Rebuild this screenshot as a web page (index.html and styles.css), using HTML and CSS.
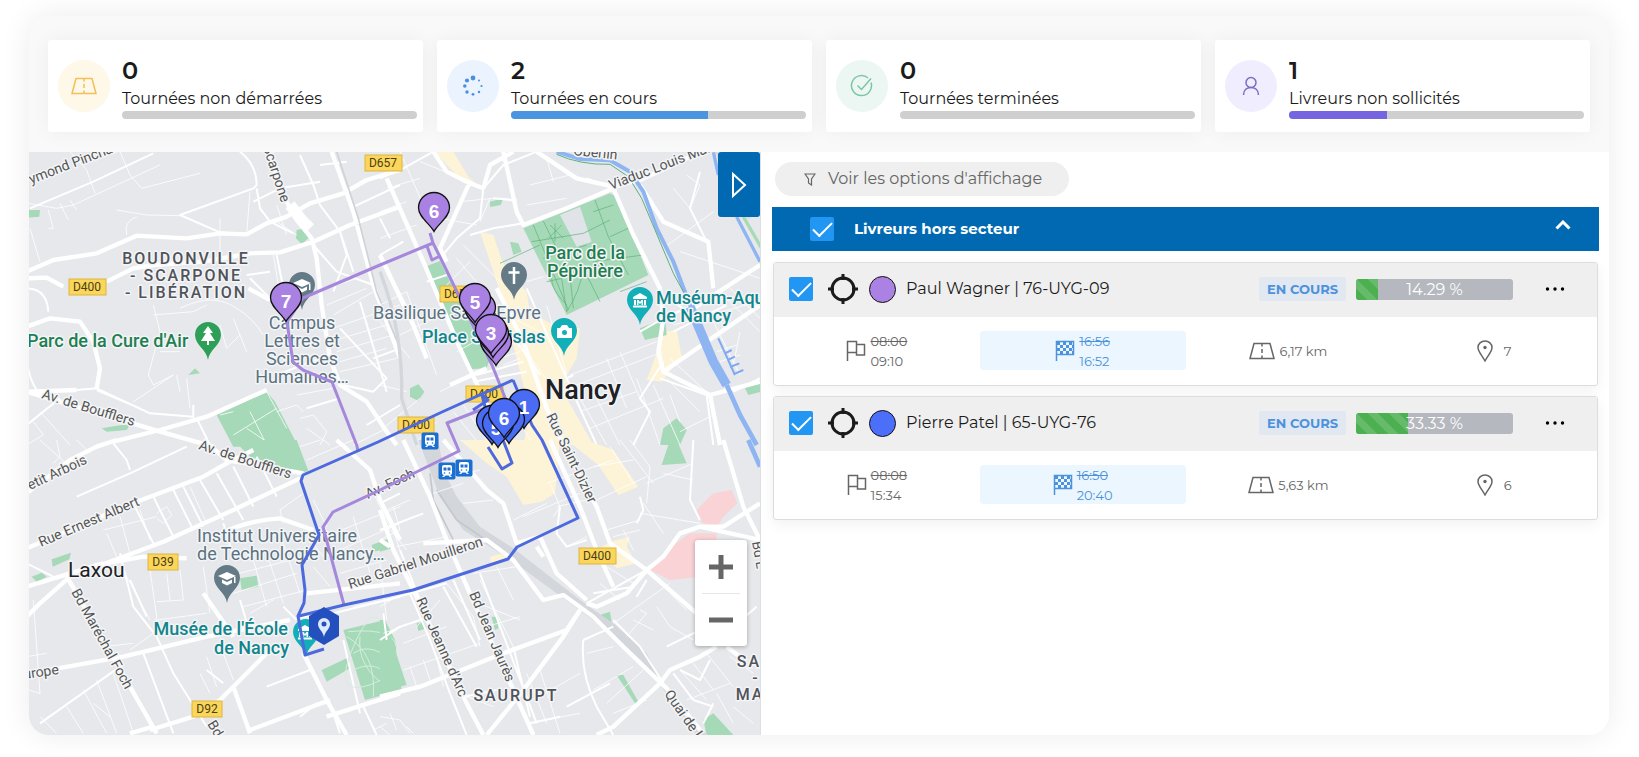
FILE: index.html
```html
<!DOCTYPE html>
<html lang="fr">
<head>
<meta charset="utf-8">
<meta name="viewport" content="width=device-width, initial-scale=1">
<title>Suivi des tournées</title>
<link rel="stylesheet" href="styles.css">
</head>
<body>
<svg class="defs" width="0" height="0" aria-hidden="true">
  <symbol id="i-road" viewBox="0 0 26 18"><path d="M5 1.500h16l4 15H1zM13 1.500v3M13 7v4M13 13.500v3" fill="none" stroke="currentColor" stroke-width="1.500"/></symbol>
  <symbol id="i-flag" viewBox="0 0 20 22"><path d="M1.500 21V1.500h9v11h-9M10.500 4.500h8v10.500h-8v-2.500" fill="none" stroke="currentColor" stroke-width="1.500"/></symbol>
  <symbol id="i-finish" viewBox="0 0 20 22"><path d="M1.500 21V1.500h17v13h-17" fill="none" stroke="currentColor" stroke-width="1.500"/><path d="M2 2h3v3H2zM8 2h3v3H8zM14 2h3v3h-3zM5 5h3v3H5zM11 5h3v3h-3zM2 8h3v3H2zM8 8h3v3H8zM14 8h3v3h-3zM5 11h3v3H5zM11 11h3v3h-3zM17 5h2v3h-2zM17 11h2v3h-2z" fill="currentColor"/></symbol>
  <symbol id="i-place" viewBox="0 0 16 22"><path d="M8 21C5 15.500 1 11.500 1 7.500a7 6.500 0 0 1 14 0c0 4-4 8-7 13.500z" fill="none" stroke="currentColor" stroke-width="1.500"/><circle cx="8" cy="7.500" r="1.700" fill="currentColor"/></symbol>
  <symbol id="i-target" viewBox="0 0 30 30"><circle cx="15" cy="15" r="11" fill="none" stroke="currentColor" stroke-width="3"/><path d="M15 0v6M15 24v6M0 15h6M24 15h6" stroke="currentColor" stroke-width="3"/></symbol>
  <symbol id="i-dots" viewBox="0 0 20 4"><circle cx="2.500" cy="2" r="1.700"/><circle cx="10" cy="2" r="1.700"/><circle cx="17.500" cy="2" r="1.700"/></symbol>
  <symbol id="pin" viewBox="-17 -17 34 42" overflow="visible"><path d="M0 23.500C-4 16-15.500 9-15.500 0a15.500 15.500 0 0 1 31 0C15.500 9 4 16 0 23.500z" stroke="#111" stroke-width="1.300"/></symbol>
  <symbol id="poi" viewBox="-14 -14 28 40" overflow="visible"><path d="M0 25C-1 15-13 10-13 0a13 13 0 0 1 26 0C13 10 1 15 0 25z"/></symbol>
  <symbol id="cap" viewBox="-9 -7 18 14" overflow="visible"><path d="M0-6 9-2 0 2-9-2zM-5 1.500 0 4l5-2.500V5L0 7.500-5 5zM7-1h1.500v6H7z" fill="#fff"/></symbol>
  <symbol id="museum" viewBox="-7 -7 14 14" overflow="visible"><path d="M0-7 7-3v2H-7v-2zM-6 0h2v5h-2zM4 0h2v5H4zM-7 5.500H7v2H-7zM-3 5V0h1.500L0 2 1.500 0H3v5H1.500V2.500L0 4-1.500 2.500V5z" fill="#fff"/></symbol>
  <symbol id="train" viewBox="-9 -9 18 18" overflow="visible"><rect x="-8.500" y="-8.500" width="17" height="17" rx="2" fill="#1a6fd0"/><path d="M-5-4q0-2 2-2h6q2 0 2 2v6q0 2-2 2l2 2h-2l-1.500-1.500h-3L-3 6h-2l2-2q-2 0-2-2z" fill="#fff"/><path d="M-3.500-3.500h3v3h-3zM.500-3.500h3v3h-3z" fill="#1a6fd0"/><circle cx="-2.500" cy="2" r=".8" fill="#1a6fd0"/><circle cx="2.500" cy="2" r=".8" fill="#1a6fd0"/></symbol>
</svg>

<main class="shell">
  <section class="stats">
    <article class="stat">
      <span class="stat-icon amber"><svg width="26" height="18"><use href="#i-road"/></svg></span>
      <div class="stat-body">
        <strong class="stat-value">0</strong>
        <span class="stat-label">Tournées non démarrées</span>
        <div class="meter"></div>
      </div>
    </article>
    <article class="stat">
      <span class="stat-icon blue"><svg width="22" height="22" viewBox="0 0 22 22" fill="currentColor"><circle cx="11" cy="3" r="2.400"/><circle cx="5" cy="5.500" r="2.100"/><circle cx="2.800" cy="11" r="1.800"/><circle cx="5" cy="17" r="1.700"/><circle cx="11" cy="19.300" r="1.400"/><circle cx="17" cy="17" r="1.200"/><circle cx="19.500" cy="11" r="1.100"/><circle cx="17" cy="5.500" r="1"/></svg></span>
      <div class="stat-body">
        <strong class="stat-value">2</strong>
        <span class="stat-label">Tournées en cours</span>
        <div class="meter"><div class="meter-fill blue-fill" style="width:66.67%"></div></div>
      </div>
    </article>
    <article class="stat">
      <span class="stat-icon green"><svg width="24" height="24" viewBox="0 0 24 24" fill="none" stroke="currentColor" stroke-width="1.500"><path d="M21 8.500A10 10 0 1 1 18 4M7.500 11.500l4 4L21 4.500"/></svg></span>
      <div class="stat-body">
        <strong class="stat-value">0</strong>
        <span class="stat-label">Tournées terminées</span>
        <div class="meter"></div>
      </div>
    </article>
    <article class="stat">
      <span class="stat-icon violet"><svg width="20" height="20" viewBox="0 0 20 20" fill="none" stroke="currentColor" stroke-width="1.500"><circle cx="10" cy="6.500" r="5"/><path d="M2.500 19c0-5 3.500-7.500 7.500-7.500s7.500 2.500 7.500 7.500"/></svg></span>
      <div class="stat-body">
        <strong class="stat-value">1</strong>
        <span class="stat-label">Livreurs non sollicités</span>
        <div class="meter"><div class="meter-fill violet-fill" style="width:33.33%"></div></div>
      </div>
    </article>
  </section>

  <div class="workspace">
    <section class="map" aria-label="Carte">
      <svg class="map-canvas" viewBox="29 152 732 583" preserveAspectRatio="xMinYMin slice">
        <rect x="29" y="152" width="900" height="900" fill="#e6e8ec"/>
        <!-- north-west -->
        <g transform="translate(20 145) scale(.33333)">
          <path class="park" d="M590 810 740 740 765 770 835 905H640zM830 255l25-5 10 30-20 18-17-18zM25 195l35 0-2 20-33 3zM505 690l20-20 15 15zM245 850l60-10 25 0-10 15-60 5z"/>
          <path class="r1" d="M25 175 110 190 160 180 420 60M300 20 330 90 365 130 540 85M150 20 200 75 225 145M85 195 100 250 85 250M120 175 145 225M150 165 170 195M30 250 60 350M290 195 380 210 480 212M320 270Q310 230 350 215M600 220V320M690 140 680 270M760 330 775 420M400 480 420 560 385 690 400 720 460 690M400 510 520 500 560 480M480 490Q580 440 650 490 700 520 730 570M600 540 620 610 660 570M640 520 680 620M420 620 480 620M470 690 480 740M500 700 510 790M340 770 460 690M40 830 70 870 20 900M60 800 150 900M600 810 640 800M640 870 770 790M680 850 740 890M690 800 740 900M770 800 830 780 850 800M830 750 940 730M740 740 800 850M840 820 880 810 920 860 900 900M860 850 930 900M1000 900 1100 850M940 550 1140 480M930 590 1100 540M950 620 1120 570M960 650 1100 610M960 680 1130 640M940 510 1060 440M920 480 1040 430M920 430 1010 400M770 230 830 270M770 180 800 270"/>
          <path class="r2" d="M30 190 220 110 400 25M660 20Q710 60 710 120L700 130 480 210 600 262 680 268M710 130 720 190 750 230 820 265M700 170 780 130 900 110M840 30 880 120 900 180 960 260 1000 380M900 60 980 50M990 190 1140 120M960 260 980 330 940 440M1080 220 1110 280M880 300 950 380 1060 420M770 330 790 430M680 390 750 380M690 400 760 470M20 430Q80 430 85 500M20 620Q20 690 50 735M170 735 230 730 390 805 520 815 520 780M230 735 360 790M530 820 570 900M20 840 120 760M860 790 960 760M1040 840 1140 780M960 550 1100 700 1060 740 970 720M1020 470 1100 740M1060 640 1140 610M770 690 900 640"/>
          <path class="r4" d="M20 380 100 345 230 325 350 272 500 280 600 265 680 268 740 235 800 215 870 175 970 145 1040 105 1140 75M20 400 80 398 130 425M260 410 340 370 400 360 550 350 690 325 780 322 880 290 990 240 1140 185M740 20 800 170 830 225 875 280 890 340 905 480 930 640 960 720 1040 770 1100 860 1130 900M935 20 1000 200 1060 420 1140 640M685 430 750 465M20 545 90 520 180 530 220 590 240 670 230 730M170 735 20 740M20 740 420 860 580 905M280 890 420 855 560 815 740 735"/>
          <path d="M810 180 845 225 870 250" fill="none" stroke="#fff" stroke-width="34"/>
          <path d="M950 20 1015 220 1070 440 1140 610" fill="none" stroke="#cfd2d6" stroke-width="5"/>
        </g>
        <!-- north-east -->
        <g transform="translate(380 145) scale(.33333)">
          <path class="shop" d="M165 20 220 20 265 95 305 130 255 115 205 65zM300 260 340 270 365 345 400 400 440 440 450 500 520 540 600 550 590 640 560 690 560 760 640 900 430 900 450 800 390 560 360 440zM850 560 890 555 905 635 845 710 800 705 830 625z"/>
          <path class="park" d="M430 250 690 145 710 155 805 390 560 510zM135 365l45-17 20 42 130 250-10 30-55 3zM390 290l25 5 10 25-25 10zM780 550l75-30 5 50-65 15zM850 850l40-30 30 35-20 45h-60zM330 170l40-10-8 20-32 6zM1095 730l50-30v40l-40 10zM90 730 115 718 133 740 115 768 90 755z"/>
          <path d="M540 210 600 185 635 290 590 305z" fill="#e0e3e8"/>
          <path d="M460 240 565 495M490 228 530 310M645 165 685 275 745 390M455 290 610 265 690 225M490 340 620 300M640 200 700 180M690 275 745 250M640 350 790 330M610 370 660 470M560 500Q600 440 610 370M560 500 545 400 500 410M580 490 570 390M510 240 550 280M545 240 505 280M525 235V290M560 480Q500 420 520 380" class="path"/>
          <path class="r1" d="M0 200 80 170M0 280 110 240M20 130 120 100M60 20 130 180M120 50 270 110M20 370 90 500M0 480 80 440M80 440 170 690M0 530 90 640M60 570 160 520M180 220 290 240M240 170 340 160 410 170M330 160 300 230M200 420 270 350M230 340 330 460M250 300 370 420M400 520 480 560M440 410 490 395M440 620 510 720M360 640 420 620M370 660 420 640M500 480 560 690M570 690 830 590M590 720 850 620M600 760 680 900M640 740 720 900M680 640 740 790M720 620 780 760M600 800 770 740M630 850 850 760M770 700 840 900M820 720 900 900M900 860 1000 810M450 120 570 90M440 180 560 160M500 40 520 110M880 130 930 190 960 120 920 90M1010 20 1040 80M850 310 1000 200M900 320 1140 400M900 480 1140 450M880 540 1100 480M1020 440 1140 560M1050 430 1140 520M1060 660 1080 560M1000 530 1080 690M1020 650 1080 630M1010 620 1070 600M870 640 1000 760M860 700 960 800M870 750 900 830M0 720 80 740M10 850 120 760M180 740 280 690M230 620 340 560M100 900 170 830M220 800 300 900M250 780 330 900M400 800 460 900"/>
          <path class="r2" d="M0 100 70 70 160 20M250 100 310 130 370 60 470 20M310 130 300 220 230 280 180 340M270 270 340 250 430 235M340 160 410 165M0 330 70 290M140 410 200 390M440 430 560 700 600 790 650 900M290 690 430 650M280 710 440 680M410 590 480 690M560 700 580 690M780 560 850 520 940 480M700 130 620 100M960 80 930 190 980 290M860 460 960 520M840 700 980 750 1000 900M850 650 780 760 810 800 760 900M1060 740 1100 720 1140 700M880 560 1040 480"/>
          <path class="r4" d="M20 100 130 350 240 610 330 800 380 900M270 110 180 310 200 350M160 20 200 80 270 115 310 130M370 20 410 200 430 240 560 190 700 130 760 270 840 430 850 520 835 620 850 680 990 750M310 130 330 60 400 20M470 20 590 100 700 125 780 105 900 50 960 20M780 120 850 230 985 290 1000 430M350 430 430 590 500 790 550 900M850 680 980 590 1140 480M990 750 1140 710M990 750 1020 900M940 490 1140 360M210 720 320 670M0 330 100 540 140 640"/>
          <path d="M0 380Q70 560 65 760L110 900" fill="none" stroke="#d3d6da" stroke-width="10"/>
          <path d="M1010 20 1080 200 1110 220" fill="none" stroke="#d9dbe0" stroke-width="8"/>
          <path class="water" d="M530 20 600 42 690 46 750 80 790 140 830 250 880 350 930 480 980 590" stroke-width="12"/>
          <path class="water" d="M930 485 1000 650 1040 720" stroke-width="28"/><path class="water" d="M1040 720 1080 810 1130 900" stroke-width="14"/>
          <path d="M530 28Q600 60 690 58L745 95 785 160 880 385 910 440" fill="none" stroke="#5cb079" stroke-width="3"/>
          <path class="water" d="M1000 20 1015 90M1070 215 1140 350" stroke-width="10"/>
          <path d="M1090 215 1145 310" stroke="#a8dab5" stroke-width="10"/>
          <path d="M1015 580 1065 690M1055 615 1035 625M1065 635 1043 645M1078 655 1050 666M1090 675 1060 688" stroke="#7fa9f0" stroke-width="6"/>
          <path d="M360 355 480 300M720 440 800 410" class="path"/>
        </g>
        <!-- south-west -->
        <g transform="translate(20 440) scale(.33333)">
          <path class="park" d="M640 0H830L865 92 840 100 690 50zM970 570l125-30 30 60 20 150-110 30zM905 690l75-35 10 30-70 40zM660 415l50-8 5 33-50 10zM95 358l58-20-5 20-50 22zM35 410l30-12 15 12-30 15zM1055 315l55-20v30l-50 10z"/>
          <path class="r1" d="M60 0 160 90M110 0 120 50 100 70M170 0 210 40M410 220 440 200 455 225 430 250 412 235M250 270 410 230M260 280 290 350M300 230 330 340M360 210 390 300M390 390 410 530 400 580 330 630M440 400 450 480M480 390 490 480 410 485M320 410 390 540M510 140 560 250M40 480 60 760 25 750M20 650 80 640M250 620 340 610M140 800 190 880M190 750 260 880M230 720 290 880M280 700 340 880M60 830 110 880M220 790 270 830M410 540 560 520M570 480 600 530M670 500 860 450M640 460 830 400M620 410 850 350M700 360 740 500M740 340 790 490M790 310 840 460M690 520 760 480M550 380 570 520M1080 370 1100 540M880 380 930 440M960 400 1100 360M870 300 910 350M940 280 1140 200M960 330 1140 250M1000 500 1140 470M1000 230 1050 400M1090 190 1140 330M1110 260 1050 140M840 20 900 0M860 60 1000 0M850 160 780 210 790 250M880 180 920 260M560 650 590 740M610 640 640 720M540 700 570 760M1080 860 1110 885M1060 870 1100 850"/>
          <path class="r2" d="M170 170 330 100 500 20M280 10 320 60 330 90M340 190 400 310M400 170 460 290M460 150 520 270M490 140 550 260M540 120 610 240M590 100 670 240M640 80 700 200M710 50 770 170M300 340 340 500 410 590 460 700 560 860M330 420 380 530M370 640 460 880M60 850 300 680M610 730 560 690M660 480 690 580M610 250 640 350M740 740 870 690M970 600 1020 820M1030 800 1070 885M20 370 100 410M940 820 960 880M840 830 890 790 920 790M1140 560 1090 590M860 540 1140 470M790 500 830 540"/>
          <path class="r4" d="M20 160 150 60 230 20 290 0M20 325 220 240 350 185 550 110 620 70 700 30M550 0 620 60 850 100M230 380 430 305 640 210 840 115M20 440 150 400 230 375 370 350 500 355M150 410 60 490 20 530M140 410 170 460 330 740 410 880M30 700 310 650 560 590 810 540M390 870 520 830 600 780 640 740 740 640M580 290Q680 240 780 235L880 270M640 740 690 880M330 880 400 860M690 870 930 780M950 0 1050 90 1080 180 1140 300M850 640 920 780 980 885M920 830 1140 760M860 460 1140 430M840 530 930 510M550 460 640 590"/>
          <path d="M985 575Q1140 560 1130 640T1030 740 1000 620 1090 560M1000 640Q1060 600 1130 680M1000 690Q1080 650 1130 740M980 590Q1070 640 1060 770M1020 590Q1010 680 1100 740" fill="none" stroke="#d3eedb" stroke-width="3"/>
        </g>
        <!-- south-east -->
        <g transform="translate(380 440) scale(.33333)">
          <path class="shop" d="M240 0H540l-15 160-40 25-55 10-50-85-60-40zM560 0h60l80 30 75 110-60 25-60-90zM690 305l60-15-10 30 30 50-60 15-50-60zM330 350l40-10 15 20-50 20z"/>
          <path class="care" d="M945 215 1000 160 1055 150 1072 190 1030 230 1010 262 970 250zM810 390 860 330 930 280H1010V405L870 420z"/>
          <path class="park" d="M0 540H15L80 735 0 755zM0 305l30-5 5 25-35 10zM870 0h20l30 70-75 5zM710 705l20 0 45 80-10 5zM970 840l30-20 60 65h-80zM660 525l30-10 5 30-25 5zM110 550l20-5 10 20-25 8zM335 530h15l5 35-10 5z"/>
          <path d="M115 0H175L190 90 230 170 300 260 400 325 620 495 700 550 800 640 850 740 930 850 985 885H950L830 720 780 660 640 540 400 365 250 270 180 170z" fill="#d3d6da"/>
          <path d="M150 100 160 180 220 300M170 150 230 240 390 350" fill="none" stroke="#c4c7cc" stroke-width="5"/>
          <path class="r1" d="M20 210 90 180M40 200 60 270 0 300M0 230 80 330M50 320 200 290M160 160 250 130M250 190 340 180M220 110 300 90M400 240 500 190M430 230 600 160M510 130 540 200 520 230M500 130 700 60M530 200 620 180M560 320 620 290M650 180 800 110M680 270 780 240M690 20 760 130M720 0 820 130M640 80 760 60M750 0 810 80 800 190M800 130 940 70M850 100 940 120M780 220 960 250M790 190 850 280M700 290 780 270M730 270 760 330M680 380 760 430M660 430 720 480M700 550 870 430M740 590 800 520 780 510M830 500 870 560 940 600M760 540 820 570M870 460 920 510M0 500 50 470M10 580 150 530M70 610 200 560M110 560 180 480M200 430 280 530 300 620M300 420 400 620M350 380 400 480M280 400 410 380M270 480 420 540M320 560 420 530M70 690 300 610M90 680 110 740M130 660 150 720M170 650 190 740M260 770 340 800M440 700 500 850M480 690 540 880M440 850 600 820M460 780 600 700M620 640 700 620M640 750 760 680M680 790 790 690M700 820 800 780M900 690 980 780M940 670 1000 750M980 640 1060 740M1010 760 1060 850M920 780 1050 730M1050 650 1120 700M1060 800 1120 850M30 820 50 870M80 860 100 880M0 830 60 840 90 880"/>
          <path class="r2" d="M0 190 60 160M0 270 130 220M60 330 120 480M20 480 200 430M90 460 150 600 210 760 260 885M0 600 60 560 150 530M10 520 20 600M190 440 290 620M220 420 300 600M300 400 470 850M400 620 450 830M250 770 350 750M540 200 530 280 560 320 620 300M610 600Q600 700 650 800L700 885M610 600 700 560M620 490 800 390M640 460 760 440M700 540 780 620 850 730M770 470 800 420M780 170 790 210 770 250M940 0 930 180 960 240M900 690 960 720 990 660M1130 500 1060 560M880 700 940 780 1000 800M860 620 920 590 980 560M1000 790 970 850M450 850 540 830M560 800 690 730"/>
          <path class="r4" d="M0 300 30 320M0 210 40 330 100 450 260 790 310 885M70 0 150 170 200 300 300 530 400 750 460 885M190 0 260 80 320 150 370 190 410 310 480 290 530 400 620 480M130 310 320 300 400 360 490 480 550 465 640 530 730 620 860 745 960 870M0 770 120 740 370 640 560 570 600 510M600 510 550 590 430 750 320 885M510 0 600 200 650 330 700 440M590 90 650 200 690 310 800 390 950 520M620 490 650 500 740 460 800 390 850 350 900 280 960 260 1030 260 1140 190M1030 0 1090 200 1140 300M650 885 700 860 840 730 870 690 960 650 1010 620M1040 620 1080 650M470 320 490 350M960 260 1140 300"/>
          <path class="water" d="M1105 0 1140 80" stroke-width="14"/>
        </g>

        <g class="shields">
          <rect x="365" y="155" width="37" height="16"/><rect x="69" y="279" width="37" height="16"/><rect x="440" y="286" width="37" height="16"/><rect x="466" y="386" width="37" height="16"/><rect x="398" y="417" width="36" height="16"/><rect x="579" y="548" width="37" height="16"/><rect x="148" y="554" width="30" height="16"/><rect x="192" y="701" width="30" height="16"/>
        </g>
        <g class="shield-text">
          <text x="383" y="167">D657</text><text x="87" y="291">D400</text><text x="458" y="298">D657</text><text x="484" y="398">D400</text><text x="416" y="429">D400</text><text x="597" y="560">D400</text><text x="163" y="566">D39</text><text x="207" y="713">D92</text>
        </g>
        <g class="street">
          <text transform="translate(31 184) rotate(-21)">ymond Pinchard</text>
          <text transform="translate(263 147) rotate(72)">Scarpone</text>
          <text transform="translate(41 398) rotate(17)">Av. de Boufflers</text>
          <text transform="translate(198 449) rotate(18)">Av. de Boufflers</text>
          <text transform="translate(611 190) rotate(-21)">Viaduc Louis Marin</text>
          <text transform="translate(573 155) rotate(6)">Oberlin</text>
          <text transform="translate(546 416) rotate(64)">Rue Saint-Dizier</text>
          <text transform="translate(30 490) rotate(-25)">etit Arbois</text>
          <text transform="translate(41 547) rotate(-23)">Rue Ernest Albert</text>
          <text transform="translate(71 592) rotate(61)">Bd Maréchal Foch</text>
          <text transform="translate(24 679) rotate(-8)">urope</text>
          <text transform="translate(207 724) rotate(58)">Bd</text>
          <text transform="translate(350 589) rotate(-18)">Rue Gabriel Mouilleron</text>
          <text transform="translate(368 499) rotate(-25)">Av. Foch</text>
          <text transform="translate(416 600) rotate(66)">Rue Jeanne d'Arc</text>
          <text transform="translate(469 594) rotate(67)">Bd Jean Jaurès</text>
          <text transform="translate(664 694) rotate(55)">Quai de l</text>
          <text transform="translate(752 542) rotate(80)">Bd L</text>
        </g>
        <g class="district">
          <text x="186" y="264">BOUDONVILLE</text><text x="186" y="281">- SCARPONE</text><text x="186" y="298">- LIBÉRATION</text>
          <text x="516" y="701">SAURUPT</text><text x="749" y="667">SA</text><text x="756" y="683">-</text><text x="750" y="700">MA</text>
        </g>
        <g class="poi-text">
          <g fill="#1e8050" class="strong"><text x="27" y="347">Parc de la Cure d'Air</text></g>
          <g fill="#1e8050" class="mid"><text x="585" y="259">Parc de la</text><text x="585" y="277">Pépinière</text></g>
          <g fill="#5b7280"><text x="373" y="319">Basilique Saint-Epvre</text><text x="197" y="542">Institut Universitaire</text><text x="197" y="560">de Technologie Nancy…</text></g>
          <g fill="#5b7280" class="centered"><text x="302" y="329">Campus</text><text x="302" y="347">Lettres et</text><text x="302" y="365">Sciences</text><text x="302" y="383">Humaines…</text></g>
          <g fill="#12858c" class="strong"><text x="656" y="304">Muséum-Aquarium</text><text x="656" y="322">de Nancy</text><text x="422" y="343">Place Stanislas</text></g>
          <g fill="#12858c" class="ended"><text x="288" y="635">Musée de l'École</text><text x="289" y="654">de Nancy</text></g>
        </g>
        <text class="city" x="545" y="399">Nancy</text>
        <text class="town" x="68" y="577">Laxou</text>

        <g>
          <use href="#poi" x="288" y="271" width="28" height="40" fill="#647b87"/><use href="#cap" x="293" y="278" width="18" height="14"/>
          <use href="#poi" x="194" y="321" width="28" height="40" fill="#2e9f56"/><path d="M208 326l5 7h-3l5 8h-6v4h-2v-4h-6l5-8h-3z" fill="#fff"/>
          <use href="#poi" x="500" y="261" width="28" height="40" fill="#647b87"/><path d="M514 267v17M508.500 272.500h11" stroke="#fff" stroke-width="2.500"/>
          <use href="#poi" x="626" y="286" width="28" height="40" fill="#12afb9"/><use href="#museum" x="633" y="293" width="14" height="14"/>
          <use href="#poi" x="550" y="317" width="28" height="40" fill="#12afb9"/><path d="M557 328h3l2-3h5l2 3h3v10h-15z" fill="#fff"/><circle cx="564.500" cy="332.500" r="2.500" fill="#12afb9"/>
          <use href="#poi" x="213" y="564" width="28" height="40" fill="#647b87"/><use href="#cap" x="218" y="571" width="18" height="14"/>
          <use href="#poi" x="292" y="618" width="28" height="40" fill="#12afb9"/><use href="#museum" x="298" y="625" width="14" height="14"/>
          <use href="#train" x="421" y="432" width="18" height="18"/><use href="#train" x="438" y="462" width="18" height="18"/><use href="#train" x="455" y="459" width="18" height="18"/>
        </g>

        <!-- delivery routes -->
        <g class="route">
          <path stroke="#a587dc" d="M430 233 433 243 440 257 460 298 492 365 506 400 447 423 459 451 380 490 333 512 323 527 344 605M433 243 380 265 303 298 287 322 293 362 303 370 332 382 357 446 358 452M427 246 432 260 440 256"/>
          <path stroke="#4d69de" d="M513 380 442 412 378 442 303 475 301 481 319 535 302 565 305 590 304 603 298 616 305 655 324 649M299 616 344 605 413 590 508 559 517 547 578 518 542 440 532 425 513 380M488 447 502 469 512 463 503 440M473 410 488 400 482 395 488 418"/>
        </g>
        <path d="M324 607 339 616V636L324 645 309 636V616z" fill="#2450bd"/><path d="M324 637c-1-6-6-8-6-13a6 6 0 0 1 12 0c0 5-5 7-6 13z" fill="#dfe8ff"/><circle cx="324" cy="624" r="2.500" fill="#2450bd"/>

        <g fill="#a881e2">
          <use href="#pin" x="417" y="191" width="34" height="42"/><use href="#pin" x="269" y="281" width="34" height="42"/>
          <use href="#pin" x="463" y="291" width="34" height="42"/><use href="#pin" x="458" y="282" width="34" height="42"/>
          <use href="#pin" x="479" y="325" width="34" height="42"/><use href="#pin" x="476" y="317" width="34" height="42"/><use href="#pin" x="474" y="313" width="34" height="42"/>
        </g>
        <g fill="#4a6cf5">
          <use href="#pin" x="507" y="388" width="34" height="42"/>
          <use href="#pin" x="475" y="404" width="34" height="42"/><use href="#pin" x="492" y="403" width="34" height="42"/><use href="#pin" x="481" y="407" width="34" height="42"/>
        </g>
        <g class="pin-text"><text x="524" y="414">1</text><text x="496" y="435">5</text></g>
        <use href="#pin" x="487" y="397" width="34" height="42" fill="#4a6cf5"/>
        <g class="pin-text"><text x="434" y="218">6</text><text x="286" y="308">7</text><text x="475" y="309">5</text><text x="491" y="340">3</text><text x="504" y="425">6</text></g>
      </svg>
      <button class="map-toggle" type="button" aria-label="Agrandir la carte"><svg width="16" height="28" viewBox="0 0 16 28"><path d="M2 3 14 14 2 25z" fill="none" stroke="#fff" stroke-width="2"/></svg></button>
      <div class="zoom">
        <button type="button" aria-label="Zoom avant"><svg width="24" height="24"><path d="M12 0v24M0 12h24" stroke="#666" stroke-width="5"/></svg></button>
        <button type="button" aria-label="Zoom arrière"><svg width="24" height="24"><path d="M0 12h24" stroke="#666" stroke-width="5"/></svg></button>
      </div>
    </section>

    <section class="panel">
      <button class="filter" type="button"><svg width="12" height="13" viewBox="0 0 12 13"><path d="M1 1h10L7.500 6v6L4.500 10V6z" fill="none" stroke="currentColor" stroke-width="1.200"/></svg><span>Voir les options d'affichage</span></button>
      <div class="group-head">
        <label class="group-label"><input class="check" type="checkbox" checked><span>Livreurs hors secteur</span></label>
        <button class="collapse" type="button" aria-label="Replier"><svg width="16" height="10" viewBox="0 0 16 10"><path d="M1.500 8.500 8 2l6.500 6.500" fill="none" stroke="#fff" stroke-width="3"/></svg></button>
      </div>
      <div class="drivers">
        <article class="driver">
          <header class="driver-head">
            <input class="check" type="checkbox" id="driver-1" checked>
            <button class="plain target" type="button" aria-label="Centrer"><svg width="30" height="30"><use href="#i-target"/></svg></button>
            <span class="swatch lilac"></span>
            <label class="driver-name" for="driver-1">Paul Wagner | 76-UYG-09</label>
            <span class="badge">EN COURS</span>
            <div class="progress"><div class="progress-fill" style="width:14.29%"></div><span class="progress-text">14.29 %</span></div>
            <button class="plain more" type="button" aria-label="Plus d'actions"><svg width="20" height="4"><use href="#i-dots"/></svg></button>
          </header>
          <div class="facts">
            <div class="fact"><svg width="20" height="22"><use href="#i-flag"/></svg><span class="times"><s>08:00</s><span>09:10</span></span></div>
            <div class="fact eta"><svg width="20" height="22"><use href="#i-finish"/></svg><span class="times"><s>16:56</s><span>16:52</span></span></div>
            <div class="fact"><svg width="26" height="18"><use href="#i-road"/></svg><span>6,17 km</span></div>
            <div class="fact stops"><svg width="16" height="22"><use href="#i-place"/></svg><span>7</span></div>
          </div>
        </article>
        <article class="driver">
          <header class="driver-head">
            <input class="check" type="checkbox" id="driver-2" checked>
            <button class="plain target" type="button" aria-label="Centrer"><svg width="30" height="30"><use href="#i-target"/></svg></button>
            <span class="swatch royal"></span>
            <label class="driver-name" for="driver-2">Pierre Patel | 65-UYG-76</label>
            <span class="badge">EN COURS</span>
            <div class="progress"><div class="progress-fill" style="width:33.33%"></div><span class="progress-text">33.33 %</span></div>
            <button class="plain more" type="button" aria-label="Plus d'actions"><svg width="20" height="4"><use href="#i-dots"/></svg></button>
          </header>
          <div class="facts">
            <div class="fact"><svg width="20" height="22"><use href="#i-flag"/></svg><span class="times"><s>08:08</s><span>15:34</span></span></div>
            <div class="fact eta"><svg width="20" height="22"><use href="#i-finish"/></svg><span class="times"><s>16:50</s><span>20:40</span></span></div>
            <div class="fact"><svg width="26" height="18"><use href="#i-road"/></svg><span>5,63 km</span></div>
            <div class="fact stops"><svg width="16" height="22"><use href="#i-place"/></svg><span>6</span></div>
          </div>
        </article>
      </div>
    </section>
  </div>
</main>
</body>
</html>
```
FILE: styles.css
```css
* { box-sizing: border-box; }
body {
  margin: 0;
  min-height: 100vh;
  display: flex;
  flex-direction: column;
  background: #fff;
  color: #1b1b1b;
  font: 16px/20px Montserrat, Inter, sans-serif;
  overflow-x: hidden;
}
button { font: inherit; color: inherit; border: 0; padding: 0; cursor: pointer; }
svg { display: block; flex: none; }
.defs { position: absolute; }

.shell {
  flex: 1;
  display: flex;
  flex-direction: column;
  margin: 16px 30px 22px 29px;
  background: #f9f9fa;
  border-radius: 20px;
  box-shadow: 0 0 30px rgba(0, 0, 0, .08);
}

/* summary tiles */
.stats {
  display: grid;
  grid-template-columns: repeat(4, 1fr);
  gap: 14px;
  padding: 24px 19px 20px;
}
.stat {
  display: flex;
  align-items: center;
  gap: 12px;
  height: 92px;
  padding: 0 6px 0 10px;
  background: #fff;
  border-radius: 3px;
  box-shadow: 0 0 20px rgba(0, 0, 0, .05);
}
.stat-icon {
  flex: none;
  display: grid;
  place-items: center;
  width: 52px;
  height: 52px;
  border-radius: 50%;
}
.amber { background: #fef8e8; color: #f4bf56; }
.blue { background: #eaf3fe; color: #4a90dd; }
.green { background: #ecf7f3; color: #7cc4a5; }
.violet { background: #f0eefe; color: #7c6bc4; }
.stat-body { flex: 1; display: flex; flex-direction: column; padding-top: 4px; }
.stat-value { font-size: 24px; line-height: 28px; font-weight: 600; }
.stat-label { margin-top: 4px; line-height: 20px; }
.meter { height: 8px; margin-top: 2px; border-radius: 4px; background: #cfcfcf; overflow: hidden; }
.meter-fill { height: 100%; }
.blue-fill { background: #4a94e0; }
.violet-fill { background: #7565e0; }

/* map and list */
.workspace {
  flex: 1;
  display: grid;
  grid-template-columns: 732fr 848fr;
  border-radius: 0 0 20px 20px;
  background: #fff;
  overflow: hidden;
}
.map { position: relative; min-height: 500px; overflow: hidden; border-right: 1px solid #dcdfe3; }
.map-canvas { position: absolute; inset: 0; width: 100%; height: 100%; font-family: Roboto, sans-serif; }
.park { fill: #a6d9b7; }
.shop { fill: #fdf3d6; }
.care { fill: #f9d3d6; }
.water { fill: none; stroke: #8fb4f2; }
.path { fill: none; stroke: #5cb079; stroke-width: 2; }
.r1, .r2, .r4 { fill: none; stroke: #fff; stroke-linejoin: round; }
.r1 { stroke-width: 3; opacity: .8; }
.r2 { stroke-width: 6; }
.r4 { stroke-width: 13; }
.route { fill: none; stroke-width: 3; stroke-linejoin: round; }
.shields rect { fill: #fbd65b; stroke: #dcb540; }
.shield-text { font-size: 12px; text-anchor: middle; fill: #4a3f16; }
.street, .district, .poi-text, .city, .town { paint-order: stroke; stroke: #f4f5f7; stroke-width: 3px; stroke-linejoin: round; }
.street { font-size: 14px; fill: #555; }
.district { font-size: 16px; font-weight: 500; letter-spacing: 2px; text-anchor: middle; fill: #505359; }
.poi-text { font-size: 18px; }
.mid { text-anchor: middle; font-weight: 500; }
.centered { text-anchor: middle; }
.strong { font-weight: 500; }
.ended { text-anchor: end; font-weight: 500; }
.city { font-size: 27px; font-weight: 500; fill: #202124; }
.town { font-size: 21px; fill: #202124; }
.pin-text { font: bold 19px "Liberation Sans", sans-serif; text-anchor: middle; fill: #fff; }

.map-toggle {
  position: absolute;
  top: 0;
  right: 0;
  display: grid;
  place-items: center;
  width: 42px;
  height: 65px;
  background: #0069b1;
  border-radius: 3px;
}
.zoom {
  position: absolute;
  right: 13px;
  bottom: 89px;
  width: 52px;
  padding: 0 7px;
  background: #fff;
  border-radius: 3px;
  box-shadow: 0 1px 4px rgba(0, 0, 0, .3);
}
.zoom button { display: grid; place-items: center; width: 100%; height: 53px; background: none; }
.zoom button + button { border-top: 1px solid #e6e6e6; }

/* driver list */
.panel { display: flex; flex-direction: column; align-items: stretch; padding: 10px 10px 20px 11px; }
.filter {
  align-self: flex-start;
  display: flex;
  align-items: center;
  gap: 12px;
  height: 34px;
  margin-left: 3px;
  padding: 0 27px 0 29px;
  border-radius: 17px;
  background: #efefef;
  color: #666;
}
.group-head {
  display: flex;
  align-items: center;
  justify-content: space-between;
  height: 44px;
  margin-top: 11px;
  padding: 0 28px 0 38px;
  background: #0069b1;
  color: #fff;
}
.group-label { display: flex; align-items: center; gap: 20px; font-size: 15px; font-weight: 700; }
.collapse { height: 18px; background: none; display: flex; }
.check {
  appearance: none;
  flex: none;
  display: grid;
  place-items: center;
  width: 24px;
  height: 24px;
  margin: 0;
  border-radius: 2px;
  background: #2196f3;
}
.check:checked::after {
  content: "";
  width: 17px;
  height: 8px;
  margin-bottom: 5px;
  border: solid #fff;
  border-width: 0 0 2px 2px;
  transform: rotate(-45deg);
}
.drivers { display: flex; flex-direction: column; gap: 10px; padding: 11px 1px 0; }
.driver {
  border: 1px solid #dcdde0;
  border-radius: 3px;
  background: #fff;
  box-shadow: 0 4px 14px rgba(0, 0, 0, .06);
}
.driver-head {
  display: flex;
  align-items: center;
  height: 54px;
  padding: 0 26px 2px 15px;
  background: #efeff0;
}
.plain { background: none; display: grid; place-items: center; }
.target { margin-left: 15px; }
.swatch { flex: none; width: 27px; height: 27px; margin: 0 10px 0 11px; border: 1px solid #111; border-radius: 50%; }
.lilac { background: #ab82e4; }
.royal { background: #4c6ffa; }
.driver-name { flex: 1; white-space: nowrap; }
.badge {
  padding: 0 8px;
  line-height: 24px;
  font-size: 13px;
  font-weight: 700;
  color: #4d92dc;
  background: #e1e8f1;
  border-radius: 2px;
}
.progress {
  position: relative;
  width: 157px;
  height: 21px;
  margin-left: 10px;
  border-radius: 3px;
  background: #b5b8be;
  overflow: hidden;
}
.progress-fill {
  height: 100%;
  background: repeating-linear-gradient(45deg, #4caf50 0 8px, #66bb6a 8px 15px);
}
.progress-text { position: absolute; inset: 0; text-align: center; line-height: 21px; color: #fff; }
.more { width: 32px; height: 30px; margin-left: 26px; }
.facts {
  display: grid;
  grid-template-columns: repeat(4, 1fr);
  align-items: center;
  padding: 14px 0 15px;
  font-size: 13px;
  color: #666;
}
.fact { display: flex; align-items: center; justify-content: center; gap: 4px; height: 39px; }
.fact.stops { gap: 11px; }
.eta { background: #ebf6fe; border-radius: 4px; color: #4d92dc; }
.times { display: flex; flex-direction: column; line-height: 20px; }
```
